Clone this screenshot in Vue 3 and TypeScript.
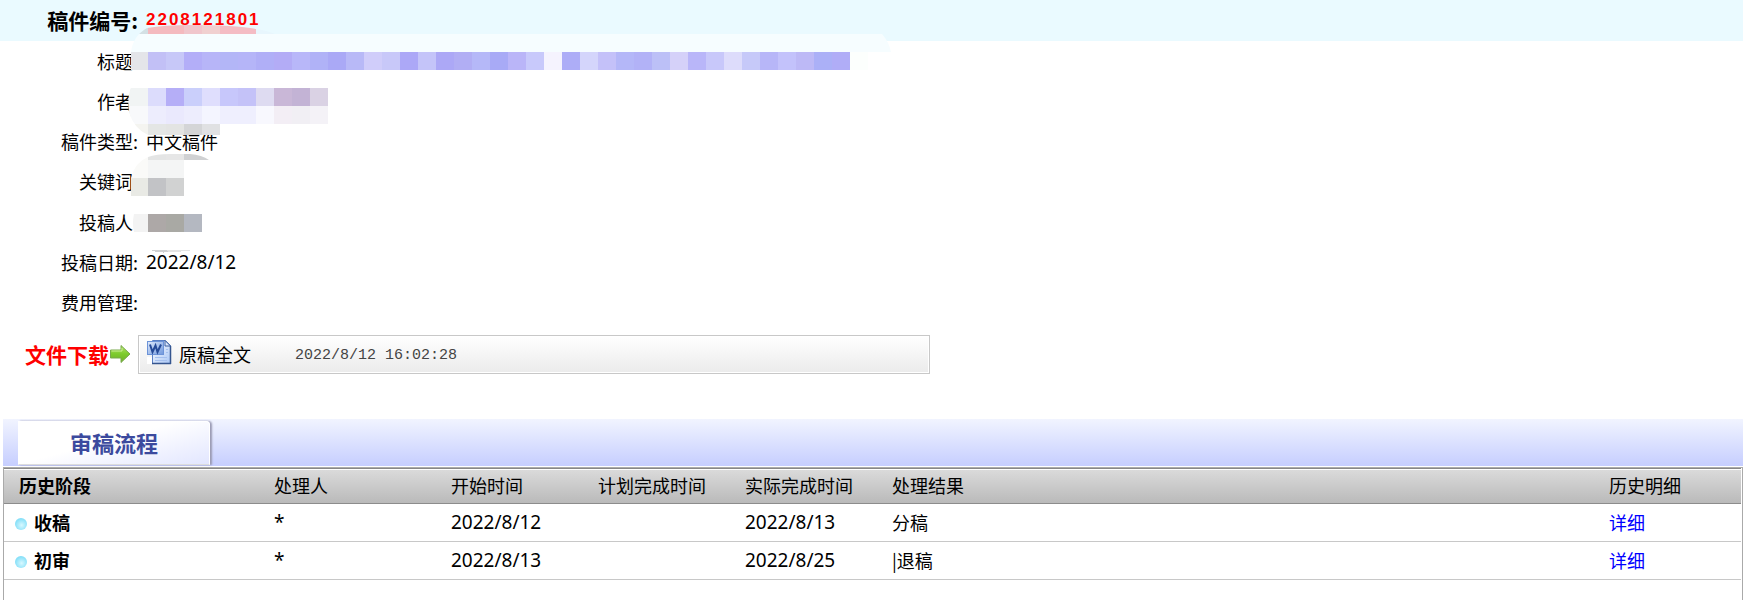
<script setup lang="ts">
interface Field {
  label: string
  value: string
  covered?: boolean
  date?: boolean
}

interface Stage {
  name: string
  handler: string
  start: string
  planned: string
  actual: string
  result: string
}

interface Cell {
  x: number
  y: number
  w: number
  h: number
  fill: string
}

const fields: Field[] = [
  { label: '标题', value: '', covered: true },
  { label: '作者', value: '', covered: true },
  { label: '稿件类型:', value: '中文稿件' },
  { label: '关键词', value: '', covered: true },
  { label: '投稿人', value: '', covered: true },
  { label: '投稿日期:', value: '2022/8/12', date: true },
  { label: '费用管理:', value: '' },
]

const stages: Stage[] = [
  { name: '收稿', handler: '*', start: '2022/8/12', planned: '', actual: '2022/8/13', result: '分稿' },
  { name: '初审', handler: '*', start: '2022/8/13', planned: '', actual: '2022/8/25', result: '|退稿' },
]

const SIZE = 18

function strip(x: number, y: number, h: number, colors: string): Cell[] {
  return colors.split(' ').map((c, i) => ({ x: x + i * SIZE, y, w: SIZE, h, fill: '#' + c }))
}

const titleCells: Cell[] = [
  ...strip(130, 25, 9, 'd3e0e4 f4babf f4babf f0c6cc f0d0d0 f4bcc4 f4bcc4 e8f6fd e8f6fd'),
  { x: 130, y: 34, w: 762, h: 18, fill: '#f6fdff' },
  ...strip(130, 52, 18,
    'e4e5e9 c2c0f6 c7c8f8 b3aef8 b7b5f8 b3b6f7 b5b5f8 b0aff7 b3acf6 b8b7f9 b0b2f7 aaa9f6 b8b9f7 d0cdfa c8c8f9 aca8f7 c4c4f9 aca8f6 ' +
    'b1aef4 b5b8f8 a8aaf6 bab5f8 c8c9fb f5f3fe adadf7 d4d5fb c4c1f9 b4b7f8 b2b2f7 bcc0f7 d5d1f9 b9b6f9 c8c8fa dddcfb c6c9f9 b7b6f8 c3c2fb bdb9f6 abb0f7 b0adf7 fcfffd'),
]

const authorCells: Cell[] = [
  ...strip(130, 88, 18, 'f1f4f4 dcdcfc b5aef7 cacffb dfdefd c7c7fb c4c2f8 dedbf1 c9b7d7 c3b3d5 dad2e4'),
  ...strip(130, 106, 18, 'f8f9fb ededfd eae9fd ededfd f4f5ff efeffe efeffe f8f8fe f3eef5 f1eff4 f4f2f7'),
  ...strip(130, 124, 11, 'f4f4f0 e4e6e5 e3e4e3 d4d5d7 e0e1e3'),
]

const keywordCells: Cell[] = [
  ...strip(130, 154, 6, 'fafaf8 e4e5e5 e6e6e6 d0d1d3 d0d1d3'),
  ...strip(130, 160, 18, 'fafaf8 f4f5f5 f4f5f5'),
  ...strip(130, 178, 18, 'e9eae5 c2c3c6 d1d2d2'),
]

const senderCells: Cell[] = strip(130, 214, 18, 'f3f3f3 ada8a7 a9a9a4 b4b8c1')
</script>

<template>
  <main class="page">
    <header class="number">
      <span class="number-label">稿件编号:</span>
      <strong class="number-value">2208121801</strong>
    </header>

    <dl class="fields">
      <template v-for="f in fields" :key="f.label">
        <dt :class="{ covered: f.covered }">{{ f.label }}</dt>
        <dd :class="{ date: f.date }">{{ f.value }}</dd>
      </template>
    </dl>

    <svg class="mosaic" width="900" height="260" viewBox="0 0 900 260" shape-rendering="crispEdges" aria-hidden="true">
      <defs>
        <clipPath id="stroke-title">
          <path d="M131 70V52Q133 36 147 28Q165 25 190 25Q235 25 256 29Q268 31 275 34H882Q889 42 891 52V70Z" />
        </clipPath>
        <clipPath id="stroke-author">
          <path d="M131 88H330V124H220V135H148Q134 129 129 112Q127 97 131 88Z" />
        </clipPath>
        <clipPath id="stroke-keyword">
          <path d="M131 196V178Q135 162 148 157Q156 154 170 154H190Q202 155 209 160H186V196Z" />
        </clipPath>
        <clipPath id="stroke-sender">
          <path d="M134 214H202V232H134Q132 223 134 214Z" />
        </clipPath>
      </defs>
      <g clip-path="url(#stroke-title)">
        <rect v-for="(c, i) in titleCells" :key="i" :x="c.x" :y="c.y" :width="c.w" :height="c.h" :fill="c.fill" />
      </g>
      <g clip-path="url(#stroke-author)">
        <rect x="127" y="88" width="4" height="36" fill="#f1f4f4" />
        <rect v-for="(c, i) in authorCells" :key="i" :x="c.x" :y="c.y" :width="c.w" :height="c.h" :fill="c.fill" />
      </g>
      <g clip-path="url(#stroke-keyword)">
        <rect v-for="(c, i) in keywordCells" :key="i" :x="c.x" :y="c.y" :width="c.w" :height="c.h" :fill="c.fill" />
      </g>
      <g clip-path="url(#stroke-sender)">
        <rect v-for="(c, i) in senderCells" :key="i" :x="c.x" :y="c.y" :width="c.w" :height="c.h" :fill="c.fill" />
      </g>
      <path d="M150 250H176Q164 255 150 250Z" fill="#cfd0d2" />
      <path d="M166 250H194Q180 252 168 252Z" fill="#e4e4e4" />
    </svg>

    <section class="download">
      <h2 class="download-label">
        <span>文件下载</span>
        <svg width="22" height="20" viewBox="0 0 22 20" aria-hidden="true">
          <defs>
            <linearGradient id="arrow-fill" x1="0" y1="0" x2="0" y2="1">
              <stop offset="0" stop-color="#b4e36a" />
              <stop offset="0.5" stop-color="#7ccb2c" />
              <stop offset="1" stop-color="#6fae2c" />
            </linearGradient>
          </defs>
          <path d="M1.5 6H12V1.500L21 10L12 18.500V14H1.500Z" fill="url(#arrow-fill)" stroke="#78a94c" stroke-linejoin="round" />
          <path d="M2.500 7H13V4" fill="none" stroke="#c9ee93" />
        </svg>
      </h2>
      <div class="file">
        <svg width="25" height="26" viewBox="0 0 25 26" aria-hidden="true">
          <defs>
            <linearGradient id="sheet" x1="0" y1="0" x2="1" y2="1">
              <stop offset="0" stop-color="#ffffff" />
              <stop offset="1" stop-color="#a9c6f5" />
            </linearGradient>
            <linearGradient id="badge" x1="0" y1="0" x2="1" y2="1">
              <stop offset="0" stop-color="#dfeafc" />
              <stop offset="1" stop-color="#6f97dc" />
            </linearGradient>
          </defs>
          <rect x="0" y="18" width="5" height="7" fill="#fff" />
          <path d="M5.500 1.500H18.500L23.500 6.500V24.500H5.500Z" fill="url(#sheet)" stroke="#5a7fc3" />
          <path d="M5 24.500H24M23.500 7V25" stroke="#35558f" stroke-width="1.500" />
          <path d="M18 1.500V7H23.500Z" fill="#dbe8fc" stroke="#3c5f9f" />
          <path d="M8 18.500H20M8 21.500H20M19 10.500H21M19 13.500H21" stroke="#a5c0ee" />
          <rect x="0.500" y="2.500" width="16" height="13" fill="url(#badge)" stroke="#6c93d8" />
          <path d="M3 5.500L5.500 13L8.500 6.500L10.500 13L14 5.500" fill="none" stroke="#254a98" stroke-width="2" />
        </svg>
        <span class="file-name">原稿全文</span>
        <time class="file-time">2022/8/12 16:02:28</time>
      </div>
    </section>

    <section class="flow">
      <div class="tabs">
        <h2 class="tab">审稿流程</h2>
      </div>
      <div class="panel">
        <table>
          <colgroup>
            <col class="c-stage" />
            <col class="c-handler" />
            <col class="c-date" />
            <col class="c-date" />
            <col class="c-date" />
            <col />
            <col class="c-detail" />
          </colgroup>
          <thead>
            <tr>
              <th class="stage-head" scope="col">历史阶段</th>
              <th scope="col">处理人</th>
              <th scope="col">开始时间</th>
              <th scope="col">计划完成时间</th>
              <th scope="col">实际完成时间</th>
              <th scope="col">处理结果</th>
              <th scope="col">历史明细</th>
            </tr>
          </thead>
          <tbody>
            <tr v-for="s in stages" :key="s.name">
              <td class="stage"><i class="dot"></i>{{ s.name }}</td>
              <td class="date">{{ s.handler }}</td>
              <td class="date">{{ s.start }}</td>
              <td class="date">{{ s.planned }}</td>
              <td class="date">{{ s.actual }}</td>
              <td>{{ s.result }}</td>
              <td><a href="#">详细</a></td>
            </tr>
          </tbody>
        </table>
      </div>
    </section>
  </main>
</template>

<style>
html,
body {
  height: 100%;
  margin: 0;
}

#app {
  height: 100%;
}
</style>

<style scoped>
.page {
  position: relative;
  display: flex;
  flex-direction: column;
  min-height: 100%;
  overflow: hidden;
  background: #fff;
  color: #000;
  font: 400 18px/24px "Noto Sans CJK SC", "Noto Sans", sans-serif;
}

.number {
  box-sizing: border-box;
  display: grid;
  grid-template-columns: 138px 1fr;
  column-gap: 8px;
  align-items: center;
  height: 41px;
  padding-bottom: 2px;
  background: #eafaff;
}

.number-label {
  text-align: right;
  font-size: 21px;
  font-weight: 700;
}

.number-value {
  color: #f00;
  font: 700 17px/24px "Liberation Sans", Arial, sans-serif;
  letter-spacing: 2px;
}

.fields {
  box-sizing: border-box;
  display: grid;
  grid-template-columns: 138px 1fr;
  grid-auto-rows: 1fr;
  column-gap: 8px;
  align-items: center;
  min-height: 283px;
  margin: 0;
  padding-bottom: 2px;
}

.fields dt {
  text-align: right;
}

.fields dt.covered {
  padding-right: 5px;
}

.fields dd {
  margin: 0;
}

.date {
  font-family: "Noto Sans", sans-serif;
  font-size: 19px;
}

.mosaic {
  position: absolute;
  top: 0;
  left: 0;
}

.download {
  display: flex;
  align-items: center;
  margin-top: 11px;
}

.download-label {
  box-sizing: border-box;
  display: flex;
  align-items: center;
  width: 138px;
  margin: 0;
  padding: 0 0 2px 25px;
  color: #f00;
  font-size: 21px;
  font-weight: 700;
  white-space: nowrap;
}

.file {
  box-sizing: border-box;
  display: flex;
  flex: 1;
  align-items: center;
  max-width: 792px;
  height: 39px;
  padding: 0 8px 2px;
  border: 1px solid #c8c8c8;
  background: linear-gradient(#fff, #ebebeb);
  box-shadow: inset 0 0 0 1px #fff;
}

.file svg {
  margin-bottom: 4px;
}

.file-name {
  margin-left: 7px;
}

.file-time {
  margin-left: 44px;
  padding-top: 4px;
  color: #444;
  font: 15px/24px "Liberation Mono", monospace;
}

.flow {
  display: flex;
  flex: 1;
  flex-direction: column;
  margin-top: 45px;
  padding-left: 3px;
}

.tabs {
  box-sizing: border-box;
  height: 48px;
  padding: 2px 0 0 15px;
  background: linear-gradient(#f1f4ff, #c6ceff);
  border-bottom: 1px solid #fff;
}

.tab {
  box-sizing: border-box;
  width: 192px;
  height: 44px;
  margin: 0;
  border: 1px solid #fff;
  border-bottom-color: #ddd;
  border-radius: 0 4px 0 0;
  background: linear-gradient(165deg, #fff 45%, #e2e6ff);
  box-shadow: 2px 0 2px #9a9ab4;
  color: #3c4a9e;
  font-size: 22px;
  font-weight: 700;
  line-height: 40px;
  text-align: center;
}

.panel {
  flex: 1;
  padding-right: 1px;
  border: 1px solid #aaa;
  border-bottom: 0;
}

table {
  width: 100%;
  border-collapse: separate;
  border-spacing: 0;
  table-layout: fixed;
}

.c-stage {
  width: 265px;
}

.c-handler {
  width: 177px;
}

.c-date {
  width: 147px;
}

.c-detail {
  width: 137px;
}

th,
td {
  box-sizing: border-box;
  height: 38px;
  padding: 0 0 2px 5px;
  border-bottom: 1px solid #c8c8c8;
  text-align: left;
  font-weight: 400;
  white-space: nowrap;
}

thead tr {
  background: linear-gradient(#dcdcdc, #b9b9b9);
}

th {
  height: 36px;
  border-top: 1px solid #888;
  border-bottom-color: #8c8c8c;
  box-shadow: inset 0 1px #fff;
}

th.stage-head {
  padding-left: 15px;
  font-weight: 700;
}

.stage {
  padding-left: 11px;
  font-weight: 700;
}

.dot {
  display: inline-block;
  width: 12px;
  height: 12px;
  margin-right: 7px;
  border-radius: 50%;
  background: radial-gradient(circle at 55% 60%, #d8f8ff, #5fd4f5);
}

a {
  color: #00f;
  text-decoration: none;
}
</style>
